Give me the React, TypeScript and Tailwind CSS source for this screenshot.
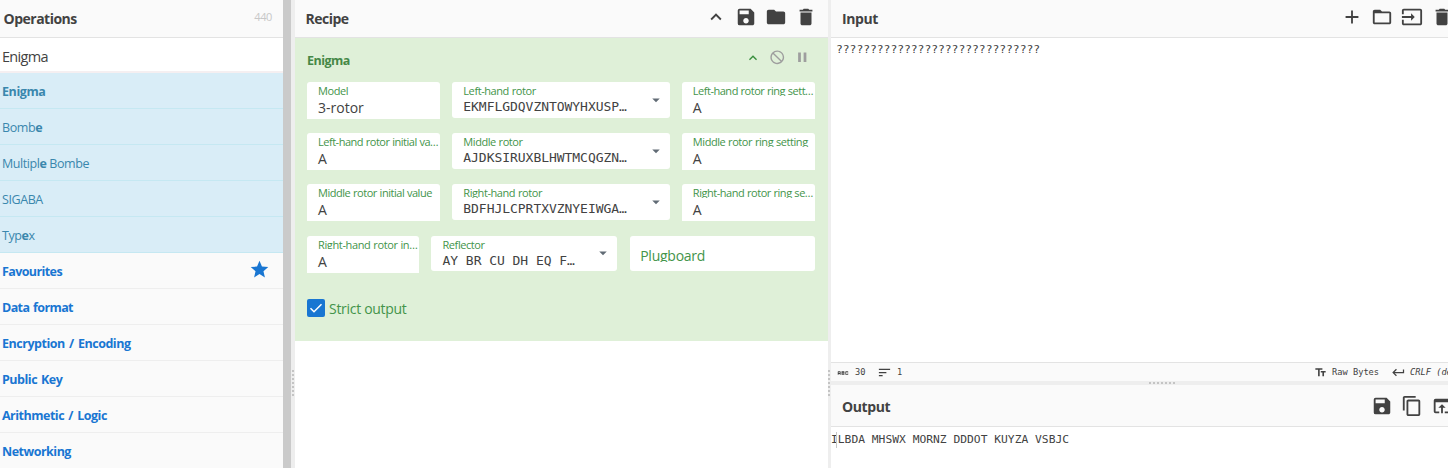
import type { ReactNode } from "react";
import {
  MdAbc, MdAdd, MdArrowDropDown, MdContentCopy, MdDelete, MdFolder, MdFolderOpen, MdInput,
  MdKeyboardArrowUp, MdKeyboardReturn, MdNotInterested, MdOpenInBrowser, MdPause, MdSave,
  MdSort, MdStar, MdTextFields,
} from "react-icons/md";

const mono = "font-['DejaVu_Sans_Mono',monospace]";

const categories: { name: string; track: string }[] = [
  { name: "Favourites", track: "tracking-[-0.6px]" },
  { name: "Data format", track: "tracking-[-0.6px] [word-spacing:1px]" },
  { name: "Encryption / Encoding", track: "tracking-[-0.48px] [word-spacing:1.5px]" },
  { name: "Public Key", track: "tracking-[-0.48px] [word-spacing:1px]" },
  { name: "Arithmetic / Logic", track: "tracking-[-0.5px] [word-spacing:1.5px]" },
  { name: "Networking", track: "tracking-[-0.5px]" },
];

const matches: { key: string; label: ReactNode }[] = [
  { key: "enigma", label: <b>Enigma</b> },
  { key: "bombe", label: <>Bomb<b>e</b></> },
  { key: "multiple", label: <>Multipl<b>e</b> Bombe</> },
  { key: "sigaba", label: "SIGABA" },
  { key: "typex", label: <>Typ<b>e</b>x</> },
];

function Label({ children, track = "tracking-[-0.42px]" }: { children: ReactNode; track?: string }) {
  return (
    <div className={`h-[12.5px] w-full overflow-hidden whitespace-nowrap text-[11px] leading-[15px] text-[#43944a] [word-spacing:0.3px] ${track}`}>
      {children}
    </div>
  );
}

function TextField({ label, value, track }: { label: string; value: string; track?: string }) {
  return (
    <div className="h-[37px] min-w-0 rounded-t-[3px] bg-white pl-[11px] pt-px">
      <Label track={track}>{label}</Label>
      <div className="pt-[2.5px] text-[14px] leading-[20px] text-[#424242]">{value}</div>
    </div>
  );
}

function SelectField({ label, value }: { label: string; value: string }) {
  return (
    <div className="flex h-[35.5px] min-w-0 items-center rounded-[3px] bg-white pl-[11px] pr-[5px]">
      <div className="h-full min-w-0 flex-1 pt-px">
        <Label>{label}</Label>
        <div className={`${mono} whitespace-pre pt-[1.5px] text-[13px] leading-[19px] tracking-[-0.04px] text-[#424242]`}>{value}</div>
      </div>
      <MdArrowDropDown className="size-[18px] shrink-0 text-[#616b75]" />
    </div>
  );
}

function Gutter({ width, className }: { width: string; className: string }) {
  return (
    <div className={`flex shrink-0 justify-center bg-[#eee] ${width} ${className}`}>
      <div className="h-[27px] w-[2px] bg-[repeating-linear-gradient(to_bottom,#c4c4c4_0_2px,transparent_2px_4px)]" />
    </div>
  );
}

export default function App() {
  return (
    <div className="flex h-[468px] w-[1448px] overflow-hidden bg-white font-['Open_Sans','Noto_Sans',sans-serif] text-[#424242]">
      <aside className="flex w-[283px] shrink-0 flex-col bg-[#fafafa]">
        <header className="flex h-[38px] shrink-0 items-center justify-between border-b border-[#e3e3e3] pl-[3.5px] pr-[11px]">
          <h2 className="-mt-px text-[14px] font-bold tracking-[-0.5px]">Operations</h2>
          <span className="-mt-[2px] text-[11px] tracking-[-0.4px] text-[#c8c8c8]">440</span>
        </header>
        <div className="flex h-[35px] shrink-0 items-center border-b-2 border-[#f5eff1] bg-white pl-[2px] pt-[4px] text-[14.5px] tracking-[-0.7px]">Enigma</div>
        <ul>
          {matches.map((m) => (
            <li key={m.key} className="flex h-[36px] items-center whitespace-pre border-b border-[#c5e8f2] bg-[#d9edf7] pl-[2px] pt-[3px] text-[12.5px] tracking-[-0.42px] text-[#3a87ad] last:border-[#d9edf7]">
              <span>{m.label}</span>
            </li>
          ))}
          {categories.map((c) => (
            <li key={c.name} className="flex h-[36px] items-center justify-between border-b border-[#eee] pl-[2px] pr-[13px] pt-[3px] text-[12.5px] font-bold text-[#1976d2]">
              <span className={c.track}>{c.name}</span>
              {c.name === "Favourites" && <MdStar className="-mt-[5px] size-[21px]" />}
            </li>
          ))}
        </ul>
      </aside>
      <div className="w-[8px] shrink-0 bg-[#cacaca]" />
      <Gutter width="w-[4px]" className="pt-[370px]" />

      <main className="w-[532.5px] shrink-0">
        <header className="flex h-[38px] items-center justify-between border-b border-[#e3e3e3] bg-[#fafafa] pl-[10.5px] pr-[10.5px]">
          <h2 className="-mt-px text-[14px] font-bold tracking-[-0.5px]">Recipe</h2>
          <div className="-mt-[3px] flex items-center gap-[8px]">
            <MdKeyboardArrowUp className="size-[22px]" />
            <MdSave className="size-[22px]" />
            <MdFolder className="size-[22px]" />
            <MdDelete className="size-[22px]" />
          </div>
        </header>
        <section className="h-[302.5px] bg-[#dff0d8] px-[12px] text-[#468847]">
          <div className="flex h-[44px] items-center justify-between pr-[5px]">
            <h3 className="pt-[2px] text-[12.5px] font-bold tracking-[-0.5px]">Enigma</h3>
            <div className="-mt-[5px] flex items-center gap-[8.5px] text-[#9e9e9e]">
              <MdKeyboardArrowUp className="size-[16px] text-[#388e3c]" />
              <MdNotInterested className="size-[16.5px]" />
              <MdPause className="size-[16.5px]" />
            </div>
          </div>
          <div className="flex flex-col">
            <div className="grid h-[51.2px] grid-cols-[133.3px_217.5px_133.3px] items-start gap-[12px]">
              <TextField label="Model" value="3-rotor" />
              <SelectField label="Left-hand rotor" value="EKMFLGDQVZNTOWYHXUSP…" />
              <TextField label="Left-hand rotor ring sett…" value="A" track="tracking-[-0.48px]" />
            </div>
            <div className="grid h-[51.2px] grid-cols-[133.3px_217.5px_133.3px] items-start gap-[12px]">
              <TextField label="Left-hand rotor initial va…" value="A" track="tracking-[-0.48px]" />
              <SelectField label="Middle rotor" value="AJDKSIRUXBLHWTMCQGZN…" />
              <TextField label="Middle rotor ring setting" value="A" />
            </div>
            <div className="grid h-[51.2px] grid-cols-[133.3px_217.5px_133.3px] items-start gap-[12px]">
              <TextField label="Middle rotor initial value" value="A" track="tracking-[-0.46px]" />
              <SelectField label="Right-hand rotor" value="BDFHJLCPRTXVZNYEIWGA…" />
              <TextField label="Right-hand rotor ring se…" value="A" track="tracking-[-0.46px]" />
            </div>
            <div className="grid h-[62px] grid-cols-[112.3px_186px_185.6px] items-start gap-[12.2px]">
              <TextField label="Right-hand rotor in…" value="A" track="tracking-[-0.36px]" />
              <SelectField label="Reflector" value="AY BR CU DH EQ F…" />
              <div className="h-[35.5px] rounded-[3px] bg-white pl-[10.5px] pt-[10px]">
                <div className="h-[16.5px] overflow-hidden text-[14px] leading-[20px] tracking-[-0.25px] text-[#43944a]">Plugboard</div>
              </div>
            </div>
          </div>
          <div className="flex items-center gap-[4px]">
            <span className="flex size-[18px] items-center justify-center rounded-[2px] bg-[#1976d2]">
              <svg viewBox="0 0 18 18" className="size-[18px]" fill="none" stroke="white" strokeWidth="1.5">
                <path d="M3.5 9.2 7 12.7 14.5 5.2" />
              </svg>
            </span>
            <span className="pt-px text-[14px] leading-[20px] tracking-[-0.3px] text-[#43944a]">Strict output</span>
          </div>
        </section>
      </main>
      <Gutter width="w-[3.5px]" className="pt-[370px]" />

      <div className="flex w-[617px] shrink-0 flex-col">
        <header className="flex h-[38px] shrink-0 items-center justify-between border-b border-[#e3e3e3] bg-[#fafafa] pl-[11px]">
          <h2 className="-mt-px text-[14px] font-bold tracking-[-0.4px]">Input</h2>
          <div className="-mr-[5px] -mt-[3px] flex items-center gap-[8px]">
            <MdAdd className="size-[22px]" />
            <MdFolderOpen className="size-[22px]" />
            <MdInput className="size-[22px]" />
            <MdDelete className="size-[22px]" />
          </div>
        </header>
        <div className={`${mono} h-[324px] shrink-0 pl-[5px] pt-[4px] text-[11.3px] leading-[16px]`}>??????????????????????????????</div>
        <div className={`${mono} flex h-[19px] shrink-0 items-center border-t border-[#e3e3e3] bg-[#fafafa] pl-[5px] pt-px text-[8.7px]`}>
          <MdAbc className="size-[14px] shrink-0" />
          <span className="ml-[5px] w-[11px] shrink-0">30</span>
          <MdSort className="ml-[11px] size-[15px] shrink-0" />
          <span className="ml-[5px] w-[6px] shrink-0">1</span>
          <MdTextFields className="ml-[411px] size-[13px] shrink-0" />
          <span className="ml-[5px] w-[48px] shrink-0 whitespace-pre">Raw Bytes</span>
          <MdKeyboardReturn className="ml-[11px] size-[15px] shrink-0" />
          <span className="ml-[4px] whitespace-pre italic">CRLF (detected)</span>
        </div>
        <div className="flex h-[4px] shrink-0 items-center bg-[#eee] pl-[318px]">
          <div className="h-[2px] w-[27px] bg-[repeating-linear-gradient(to_right,#c4c4c4_0_2px,transparent_2px_4px)]" />
        </div>
        <header className="flex h-[42px] shrink-0 items-center justify-between border-b border-[#e3e3e3] bg-[#fafafa] pl-[11px]">
          <h2 className="pt-[2px] text-[14px] font-bold tracking-[-0.4px]">Output</h2>
          <div className="-mr-[5px] flex items-center gap-[8px]">
            <MdSave className="size-[22px]" />
            <MdContentCopy className="size-[22px]" />
            <MdOpenInBrowser className="size-[22px]" />
          </div>
        </header>
        <div className={`${mono} flex pt-[5px] text-[11.3px] leading-[16px]`}>
          <span>I</span>
          <span className="-ml-[2px] w-0 border-l border-[#c8c8c8]" />
          <span className="ml-[1px] whitespace-pre">LBDA MHSWX MORNZ DDDOT KUYZA VSBJC</span>
        </div>
      </div>
    </div>
  );
}
